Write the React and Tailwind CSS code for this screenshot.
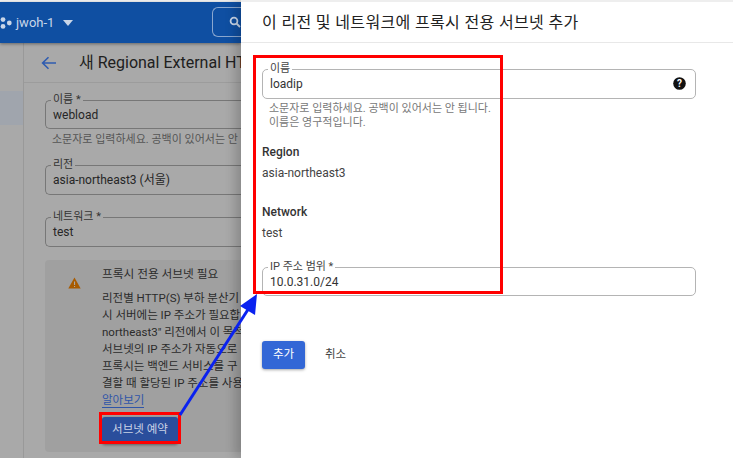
const font = { fontFamily: '"Roboto", "Noto Sans CJK KR", sans-serif' };

function Field({ label, value, star, className = "", dim }) {
  return (
    <div className={`relative border rounded-[5px] ${dim ? "border-[#777] border-r-0 rounded-r-none" : "border-[#b4b4b4]"} ${className}`}>
      <span className={`absolute left-[5px] -top-[8px] px-[2px] text-[11px] leading-[14px] whitespace-nowrap ${dim ? "bg-[#a9a9a9] text-[#333]" : "bg-white text-[#444]"}`}>
        {label}{star}
      </span>
      <div className={`h-full flex items-center pl-[7px] text-[12px] ${dim ? "text-[#262626]" : "text-[#333]"}`}><span className="leading-[14px]">{value}</span></div>
    </div>
  );
}

function LeftPane() {
  return (
    <div className="w-[241px] h-full shrink-0 bg-[#a9a9a9] flex flex-col overflow-hidden">
      <div className="h-[2px] bg-[#f0f0f0] shrink-0" />
      <div className="h-[41px] shrink-0 bg-[#0f4fa2] flex items-center shadow-[0_1px_3px_rgba(0,0,0,0.4)] relative">
        <svg width="12" height="12" viewBox="0 0 12 12" fill="#c9d6e8">
          <circle cx="3" cy="2.6" r="2.4" />
          <circle cx="3" cy="9.4" r="2.4" />
          <circle cx="9.3" cy="6" r="2.4" />
        </svg>
        <span className="ml-[4px] text-[13px] text-[#c9d6e8]">jwoh-1</span>
        <svg width="12" height="6" viewBox="0 0 12 6" className="ml-[8px]" fill="#c9d6e8"><path d="M1 0h10L6 6z" /></svg>
        <div className="ml-[auto] w-[29px] h-[30px] border border-[#8aa7cf] border-r-0 rounded-l-[6px] mb-[1px] flex items-center pl-[16px]">
          <svg width="12" height="12" viewBox="0 0 12 12" fill="none" stroke="#c9d6e8" strokeWidth="1.8" className="shrink-0">
            <circle cx="5" cy="5" r="3.4" /><path d="M7.5 7.5L11 11" />
          </svg>
        </div>
      </div>
      <div className="flex-1 flex min-h-0">
        <div className="w-[24px] shrink-0 border-r border-[#999] pt-[48px]">
          <div className="h-[34px] bg-[#a0a5ad]" />
        </div>
        <div className="flex-1 min-w-0 flex flex-col">
          <div className="h-[40px] shrink-0 flex items-center border-b border-[#9c9c9c]">
            <svg width="16" height="14" viewBox="0 0 16 14" fill="none" stroke="#2f5cb0" strokeWidth="1.6" className="ml-[17px] shrink-0">
              <path d="M15 7H2M7.5 1.2L1.6 7l5.9 5.8" />
            </svg>
            <span className="ml-[22px] text-[16px] text-[#202020] whitespace-nowrap">새 Regional External HTTP</span>
          </div>
          <div className="pl-[21px] pt-[17px] flex flex-col">
            <Field dim label="이름" star="  *" value="webload" className="h-[29px] w-[220px]" />
            <div className="mt-[4px] ml-[7px] text-[11px] text-[#555] whitespace-nowrap h-[14px] leading-[14px]">소문자로 입력하세요. 공백이 있어서는 안</div>
            <Field dim label="리전" value="asia-northeast3 (서울)" className="mt-[18px] h-[30px] w-[220px]" />
            <Field dim label="네트워크" star=" *" value="test" className="mt-[22px] h-[30px] w-[220px]" />
            <div className="mt-[13px] w-[220px] h-[192px] bg-[#a0a0a0] rounded-[4px] flex overflow-hidden">
              <div className="w-[57px] shrink-0 pl-[23px] pt-[17px]">
                <svg width="13" height="12" viewBox="0 0 13 12"><path d="M6.5 0.5L12.7 11.5H0.3z" fill="#a85b00" /><path d="M6 4.5h1.1v3.6H6zM6 9h1.1v1.1H6z" fill="#a9a9a9" /></svg>
              </div>
              <div className="min-w-0 pt-[4px] whitespace-nowrap text-[#2b2b2b]">
                <div className="text-[11.7px] leading-[20px]">프록시 전용 서브넷 필요</div>
                <div className="mt-[5.5px] text-[11.5px] leading-[17px]">
                  <div>리전별 HTTP(S) 부하 분산기</div>
                  <div>시 서버에는 IP 주소가 필요합</div>
                  <div>northeast3" 리전에서 이 목적</div>
                  <div>서브넷의 IP 주소가 자동으로</div>
                  <div>프록시는 백엔드 서비스를 구</div>
                  <div>결할 때 할당된 IP 주소를 사용</div>
                  <div><span className="text-[#2f55a8] border-b border-[#2f55a8]">알아보기</span></div>
                </div>
                <button className="mt-[8px] w-[76px] h-[27px] block bg-[#2a4e9c] text-[#c9d3e6] rounded-[3px] text-[11.5px] shadow-[0_1px_3px_rgba(0,0,0,0.4)]">서브넷 예약</button>
              </div>
            </div>
          </div>
        </div>
      </div>
    </div>
  );
}

function RightPane() {
  return (
    <div className="flex-1 min-w-0 h-full bg-white flex flex-col shadow-[-6px_0_10px_rgba(0,0,0,0.18)] relative">
      <div className="h-[2px] bg-[#eeeeee] shrink-0" />
      <div className="h-[41px] shrink-0 border-b border-[#e8e8e8] flex items-center pl-[21px] pt-[1px] text-[16px] text-[#222] tracking-[0.35px]">
        이 리전 및 네트워크에 프록시 전용 서브넷 추가
      </div>
      <div className="pl-[21px] pr-[37px] pt-[26px] flex flex-col">
        <div className="relative">
          <Field label="이름" value="loadip" className="h-[30px]" />
          <svg width="13" height="13" viewBox="0 0 13 13" className="absolute right-[10px] top-[8px]">
            <circle cx="6.5" cy="6.5" r="6.3" fill="#111" />
            <text x="6.5" y="10" textAnchor="middle" fontSize="10" fontWeight="700" fill="#fff" fontFamily="Roboto">?</text>
          </svg>
        </div>
        <div className="mt-[3px] ml-[7px] text-[11px] leading-[14px] text-[#777]">
          <div>소문자로 입력하세요. 공백이 있어서는 안 됩니다.</div>
          <div>이름은 영구적입니다.</div>
        </div>
        <div className="mt-[15px] text-[12px] leading-[14px] font-medium text-[#333]">Region</div>
        <div className="mt-[7px] text-[12px] leading-[14px] text-[#444]">asia-northeast3</div>
        <div className="mt-[25px] text-[12px] leading-[14px] font-medium text-[#333]">Network</div>
        <div className="mt-[7px] text-[12px] leading-[14px] text-[#444]">test</div>
        <Field label="IP 주소 범위" star=" *" value="10.0.31.0/24" className="mt-[27px] h-[29px]" />
        <div className="mt-[45px] flex items-center">
          <button className="w-[43px] h-[28px] bg-[#3367d6] text-white text-[11.5px] rounded-[3px] shadow-[0_1px_3px_rgba(0,0,0,0.35)]">추가</button>
          <span className="ml-[20px] text-[11.5px] text-[#444]">취소</span>
        </div>
      </div>
    </div>
  );
}

export default function App() {
  return (
    <div className="relative w-[733px] h-[458px] overflow-hidden flex bg-white" style={font}>
      <LeftPane />
      <RightPane />
      <div className="absolute left-[253px] top-[55px] w-[250px] h-[239px] border-[3px] border-[#ff0000] pointer-events-none" />
      <div className="absolute left-[99px] top-[412px] w-[82px] h-[32px] border-[3px] border-[#ff0000] pointer-events-none" />
      <svg className="absolute left-0 top-0 pointer-events-none" width="733" height="458" viewBox="0 0 733 458">
        <path d="M180 415L249 308" stroke="#0a22f0" strokeWidth="3" fill="none" />
        <path d="M257 294L240 306L255 315z" fill="#0a22f0" />
      </svg>
    </div>
  );
}
